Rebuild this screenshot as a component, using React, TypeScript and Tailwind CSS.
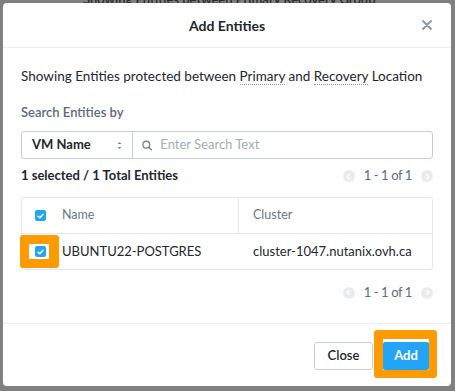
import { useState } from "react";

const FONT = { fontFamily: "Lato, 'Open Sans', sans-serif" };

function Check() {
  return (
    <span className="flex h-[11px] w-[11px] items-center justify-center rounded-[2px] bg-[#22a5f7]">
      <svg width="7" height="6" viewBox="0 0 7 6">
        <path d="M1 3.2 L2.8 4.8 L6 1.2" fill="none" stroke="white" strokeWidth="1.5" strokeLinecap="round" strokeLinejoin="round" />
      </svg>
    </span>
  );
}

function Pager() {
  return (
    <div className="flex items-center gap-[9px] text-[13px] tracking-[-0.4px] text-[#5b6b7b]">
      <span className="flex h-[12px] w-[12px] items-center justify-center rounded-full bg-[#e9ecef]">
        <svg width="5" height="7" viewBox="0 0 5 7">
          <path d="M3.8 1 L1.3 3.5 L3.8 6" fill="none" stroke="white" strokeWidth="1.3" />
        </svg>
      </span>
      <span>1 - 1 of 1</span>
      <span className="flex h-[12px] w-[12px] items-center justify-center rounded-full bg-[#e9ecef]">
        <svg width="5" height="7" viewBox="0 0 5 7">
          <path d="M1.2 1 L3.7 3.5 L1.2 6" fill="none" stroke="white" strokeWidth="1.3" />
        </svg>
      </span>
    </div>
  );
}

export default function App() {
  const [query, setQuery] = useState("");

  return (
    <div className="relative h-[391px] w-[455px] overflow-hidden bg-[#808080] p-[3px]" style={FONT}>
      {/* page text behind the dialog */}
      <div className="absolute left-[83px] top-[-10px] text-[13px] font-semibold text-[#2a2a2a]">
        Showing Entities between Primary Recovery Group
      </div>

      <div className="relative flex h-[383px] w-[448px] flex-col rounded-[4px] bg-white text-[#22272e]">
        {/* header */}
        <div className="relative flex h-[45px] items-center justify-center border-b border-[#eceff2]">
          <span className="text-[14px] font-bold">Add Entities</span>
          <button className="absolute right-[19px] top-[17px] text-[#8796a8]">
            <svg width="10" height="10" viewBox="0 0 10 10">
              <path d="M1 1 L9 9 M9 1 L1 9" stroke="currentColor" strokeWidth="1.8" strokeLinecap="round" />
            </svg>
          </button>
        </div>

        {/* body */}
        <div className="flex flex-1 flex-col px-[18px] pt-[20px]">
          <p className="text-[13.5px] leading-[16px]">
            Showing Entities protected between{" "}
            <span className="border-b border-dotted border-[#8796a8]">Primary</span> and{" "}
            <span className="border-b border-dotted border-[#8796a8]">Recovery</span> Location
          </p>

          <p className="mt-[20px] text-[13px] font-semibold leading-[16px] text-[#5b6b7b]">Search Entities by</p>

          <div className="mt-[11px] flex h-[28px] rounded-[3px] border border-[#c8ced6]">
            <div className="flex w-[111px] items-center justify-between border-r border-[#c8ced6] pl-[10px] pr-[10px]">
              <span className="text-[13px] font-bold">VM Name</span>
              <svg width="5" height="9" viewBox="0 0 5 9">
                <path d="M0.5 3 L2.5 1 L4.5 3 Z M0.5 6 L2.5 8 L4.5 6 Z" fill="#7a8796" />
              </svg>
            </div>
            <div className="flex flex-1 items-center gap-[8px] pl-[9px]">
              <svg width="11" height="11" viewBox="0 0 11 11">
                <circle cx="4.6" cy="4.6" r="3.6" fill="none" stroke="#7a8796" strokeWidth="1.5" />
                <path d="M7.3 7.3 L10 10" stroke="#7a8796" strokeWidth="1.6" strokeLinecap="round" />
              </svg>
              <input
                value={query}
                onChange={(e) => setQuery(e.target.value)}
                placeholder="Enter Search Text"
                className="w-full bg-transparent text-[13px] outline-none placeholder:text-[#a3adb8]"
              />
            </div>
          </div>

          <div className="mt-[9px] flex h-[16px] items-center justify-between">
            <span className="text-[13px] font-bold">1 selected / 1 Total Entities</span>
            <Pager />
          </div>

          <div className="mt-[13px] rounded-[3px] border border-[#e3e7eb]">
            <div className="flex h-[36px] items-center border-b border-[#e3e7eb] text-[12.5px] text-[#6b7785]">
              <div className="flex w-[217px] items-center self-stretch border-r border-[#e3e7eb] pl-[13px]">
                <Check />
                <span className="ml-[16px]">Name</span>
              </div>
              <span className="pl-[14px]">Cluster</span>
            </div>
            <div className="flex h-[35px] items-center text-[13px]">
              <div className="relative flex w-[217px] items-center self-stretch pl-[13px]">
                <span className="absolute left-[-2px] top-[1px] h-[33px] w-[39px] rounded-[3px] bg-[#ff9b00]" />
                <span className="absolute left-[7px] top-[10px] h-[15px] w-[20px] bg-white" />
                <span className="relative">
                  <Check />
                </span>
                <span className="ml-[16px]">UBUNTU22-POSTGRES</span>
              </div>
              <span className="pl-[14px]">cluster-1047.nutanix.ovh.ca</span>
            </div>
          </div>

          <div className="mt-[13px] flex justify-end">
            <Pager />
          </div>
        </div>

        {/* footer */}
        <div className="flex h-[63px] items-center justify-end gap-[10px] border-t border-[#eceff2] pr-[22px] pt-[2px]">
          <button className="h-[28px] w-[59px] rounded-[3px] border border-[#c8ced6] text-[13px] font-semibold">Close</button>
          <div className="relative">
            <span className="absolute -bottom-[8px] -left-[9px] -right-[8px] -top-[12px] rounded-[3px] border-[9px] border-b-[8px] border-r-[8px] border-[#ff9b00] bg-white" />
            <button className="relative h-[28px] w-[46px] rounded-[2px] bg-[#22a5f7] text-[13px] font-bold text-white">Add</button>
          </div>
        </div>
      </div>
    </div>
  );
}
